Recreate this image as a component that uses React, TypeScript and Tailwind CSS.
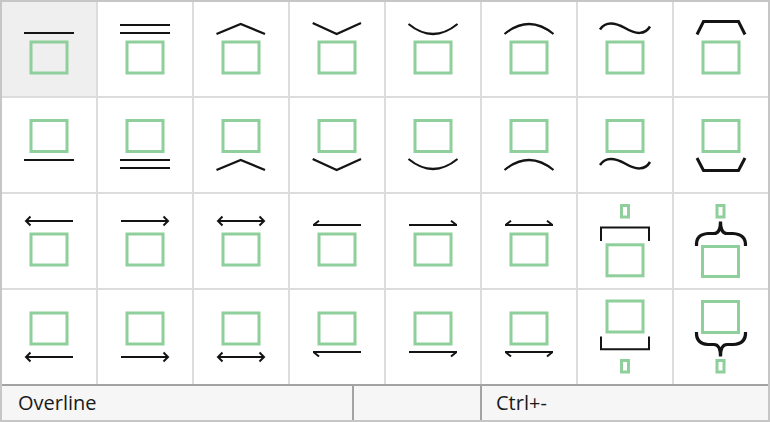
import React from 'react';

// accent / bracket templates shown in the palette, one 94x94 drawing per cell
const INK = '#141414';
const SLOT = '#8fcf9c';

type BoxProps = { x: number; y: number; w: number; h: number };

const Slot: React.FC<BoxProps> = ({ x, y, w, h }) => (
  <rect x={x} y={y} width={w} height={h} fill="none" stroke={SLOT} strokeWidth={3} />
);

const Ink: React.FC<{ d: string; w?: number }> = ({ d, w = 2 }) => (
  <path d={d} fill="none" stroke={INK} strokeWidth={w} strokeLinejoin="miter" strokeLinecap="butt" />
);

const top = <Slot x={29} y={40} w={36} h={31} />;
const bottom = <Slot x={29} y={23} w={36} h={31} />;
const below = <Slot x={29} y={22.5} w={36} h={31} />;

const cells: React.ReactNode[] = [
  // row 1: accents over the slot
  <>
    <Ink d="M22 31 H72" />
    {top}
  </>,
  <>
    <Ink d="M22 23 H72 M22 31 H72" />
    {top}
  </>,
  <>
    <Ink d="M22.5 32 L46.7 22 L71 32" w={2.3} />
    {top}
  </>,
  <>
    <Ink d="M22.7 21 L46.7 32 L71 21" w={2.3} />
    {top}
  </>,
  <>
    <Ink d="M22.5 22 Q47 42 71.5 22" w={2.2} />
    {top}
  </>,
  <>
    <Ink d="M22.5 32 Q47 12 71.5 32" w={2.2} />
    {top}
  </>,
  <>
    <Ink d="M22 27.5 C27 20 36 20 47 26 C58 32.5 67 33 72 24.5" w={2.5} />
    {top}
  </>,
  <>
    <Ink d="M23 32.5 L29.5 19.5 H64.5 L71 32.5" w={3} />
    {top}
  </>,

  // row 2: accents under the slot
  <>
    {below}
    <Ink d="M22 62 H72" />
  </>,
  <>
    {below}
    <Ink d="M22 62 H72 M22 70 H72" />
  </>,
  <>
    {below}
    <Ink d="M22.5 72 L46.7 62 L71 72" w={2.3} />
  </>,
  <>
    {below}
    <Ink d="M22.7 61 L46.7 72 L71 61" w={2.3} />
  </>,
  <>
    {below}
    <Ink d="M22.5 61 Q47 81 71.5 61" w={2.2} />
  </>,
  <>
    {below}
    <Ink d="M22.5 72 Q47 52 71.5 72" w={2.2} />
  </>,
  <>
    {below}
    <Ink d="M22 67 C27 59.5 36 59.5 47 65.5 C58 72 67 72.5 72 64" w={2.5} />
  </>,
  <>
    {below}
    <Ink d="M23 60 L29.5 72.5 H64.5 L71 60" w={3} />
  </>,

  // row 3: arrows, harpoons and braces over
  <>
    <Ink d="M24 27 H71 M28.5 22.5 L24 27 L28.5 31.5" />
    {top}
  </>,
  <>
    <Ink d="M23 27 H70 M65.5 22.5 L70 27 L65.5 31.5" />
    {top}
  </>,
  <>
    <Ink d="M24 27 H70 M28.5 22.5 L24 27 L28.5 31.5 M65.5 22.5 L70 27 L65.5 31.5" />
    {top}
  </>,
  <>
    <Ink d="M23 31 H71 M23.5 31 L29 26.7" />
    {top}
  </>,
  <>
    <Ink d="M23 31 H71 M70.5 31 L65 26.7" />
    {top}
  </>,
  <>
    <Ink d="M23 31 H71 M23.5 31 L29 26.7 M70.5 31 L65 26.7" />
    {top}
  </>,
  <>
    <Slot x={43.5} y={11.5} w={7} h={11.5} />
    <Ink d="M23 47 V33.5 H71 V47" />
    <Slot x={29} y={50.8} w={36} h={31} />
  </>,
  <>
    <Slot x={43} y={11.5} w={7} h={11.5} />
    <Ink
      d="M22.5 52 C22 44 26 40 34 39.5 L40 39.5 C44 39.5 46.5 36 46.5 27.5 C46.5 36 49 39.5 53 39.5 L59 39.5 C67 40 72 44 71.5 52"
      w={3.2}
    />
    <Slot x={28.5} y={52.5} w={36} h={30} />
  </>,

  // row 4: arrows, harpoons and braces under
  <>
    {bottom}
    <Ink d="M24 67 H71 M28.5 62.5 L24 67 L28.5 71.5" />
  </>,
  <>
    {bottom}
    <Ink d="M23 67 H70 M65.5 62.5 L70 67 L65.5 71.5" />
  </>,
  <>
    {bottom}
    <Ink d="M24 67 H70 M28.5 62.5 L24 67 L28.5 71.5 M65.5 62.5 L70 67 L65.5 71.5" />
  </>,
  <>
    {bottom}
    <Ink d="M23 62 H71 M23.5 62 L29 66.5" />
  </>,
  <>
    {bottom}
    <Ink d="M23 62 H71 M70.5 62 L65 66.5" />
  </>,
  <>
    {bottom}
    <Ink d="M23 62 H71 M23.5 62 L29 66.5 M70.5 62 L65 66.5" />
  </>,
  <>
    <Slot x={29} y={11} w={36} h={31} />
    <Ink d="M23 46.5 V59.3 H71 V46.5" />
    <Slot x={43.5} y={70.5} w={7} h={11.5} />
  </>,
  <>
    <Slot x={28.5} y={11.5} w={36} h={31} />
    <Ink
      d="M22.5 42 C22 50 26 54 34 54.5 L40 54.5 C44 54.5 46.5 58 46.5 66.5 C46.5 58 49 54.5 53 54.5 L59 54.5 C67 54 72 50 71.5 42"
      w={3.2}
    />
    <Slot x={43} y={70.5} w={7} h={11.5} />
  </>,
];

export default function App() {
  return (
    <div className="w-[770px] h-[422px] flex flex-col border-2 border-[#c6c6c6] bg-white font-['Open_Sans',sans-serif]">
      <div className="grid grid-cols-8 grid-rows-[repeat(4,94px)] gap-[2px] bg-[#dcdcdc]">
        {cells.map((glyph, i) => (
          <div key={i} className={i === 0 ? 'bg-[#efefef]' : 'bg-white'}>
            <svg width={94} height={94} viewBox="0 0 94 94" className="block">
              {glyph}
            </svg>
          </div>
        ))}
      </div>
      <div className="flex flex-1 border-t-2 border-[#a3a3a3] bg-[#f6f6f6] text-[20px] text-[#1a1a1a]">
        <div className="w-[350px] flex items-center pl-[16px]">Overline</div>
        <div className="w-[130px] border-x-2 border-[#a3a3a3]" />
        <div className="flex-1 flex items-center pl-[14px]">Ctrl+-</div>
      </div>
    </div>
  );
}
